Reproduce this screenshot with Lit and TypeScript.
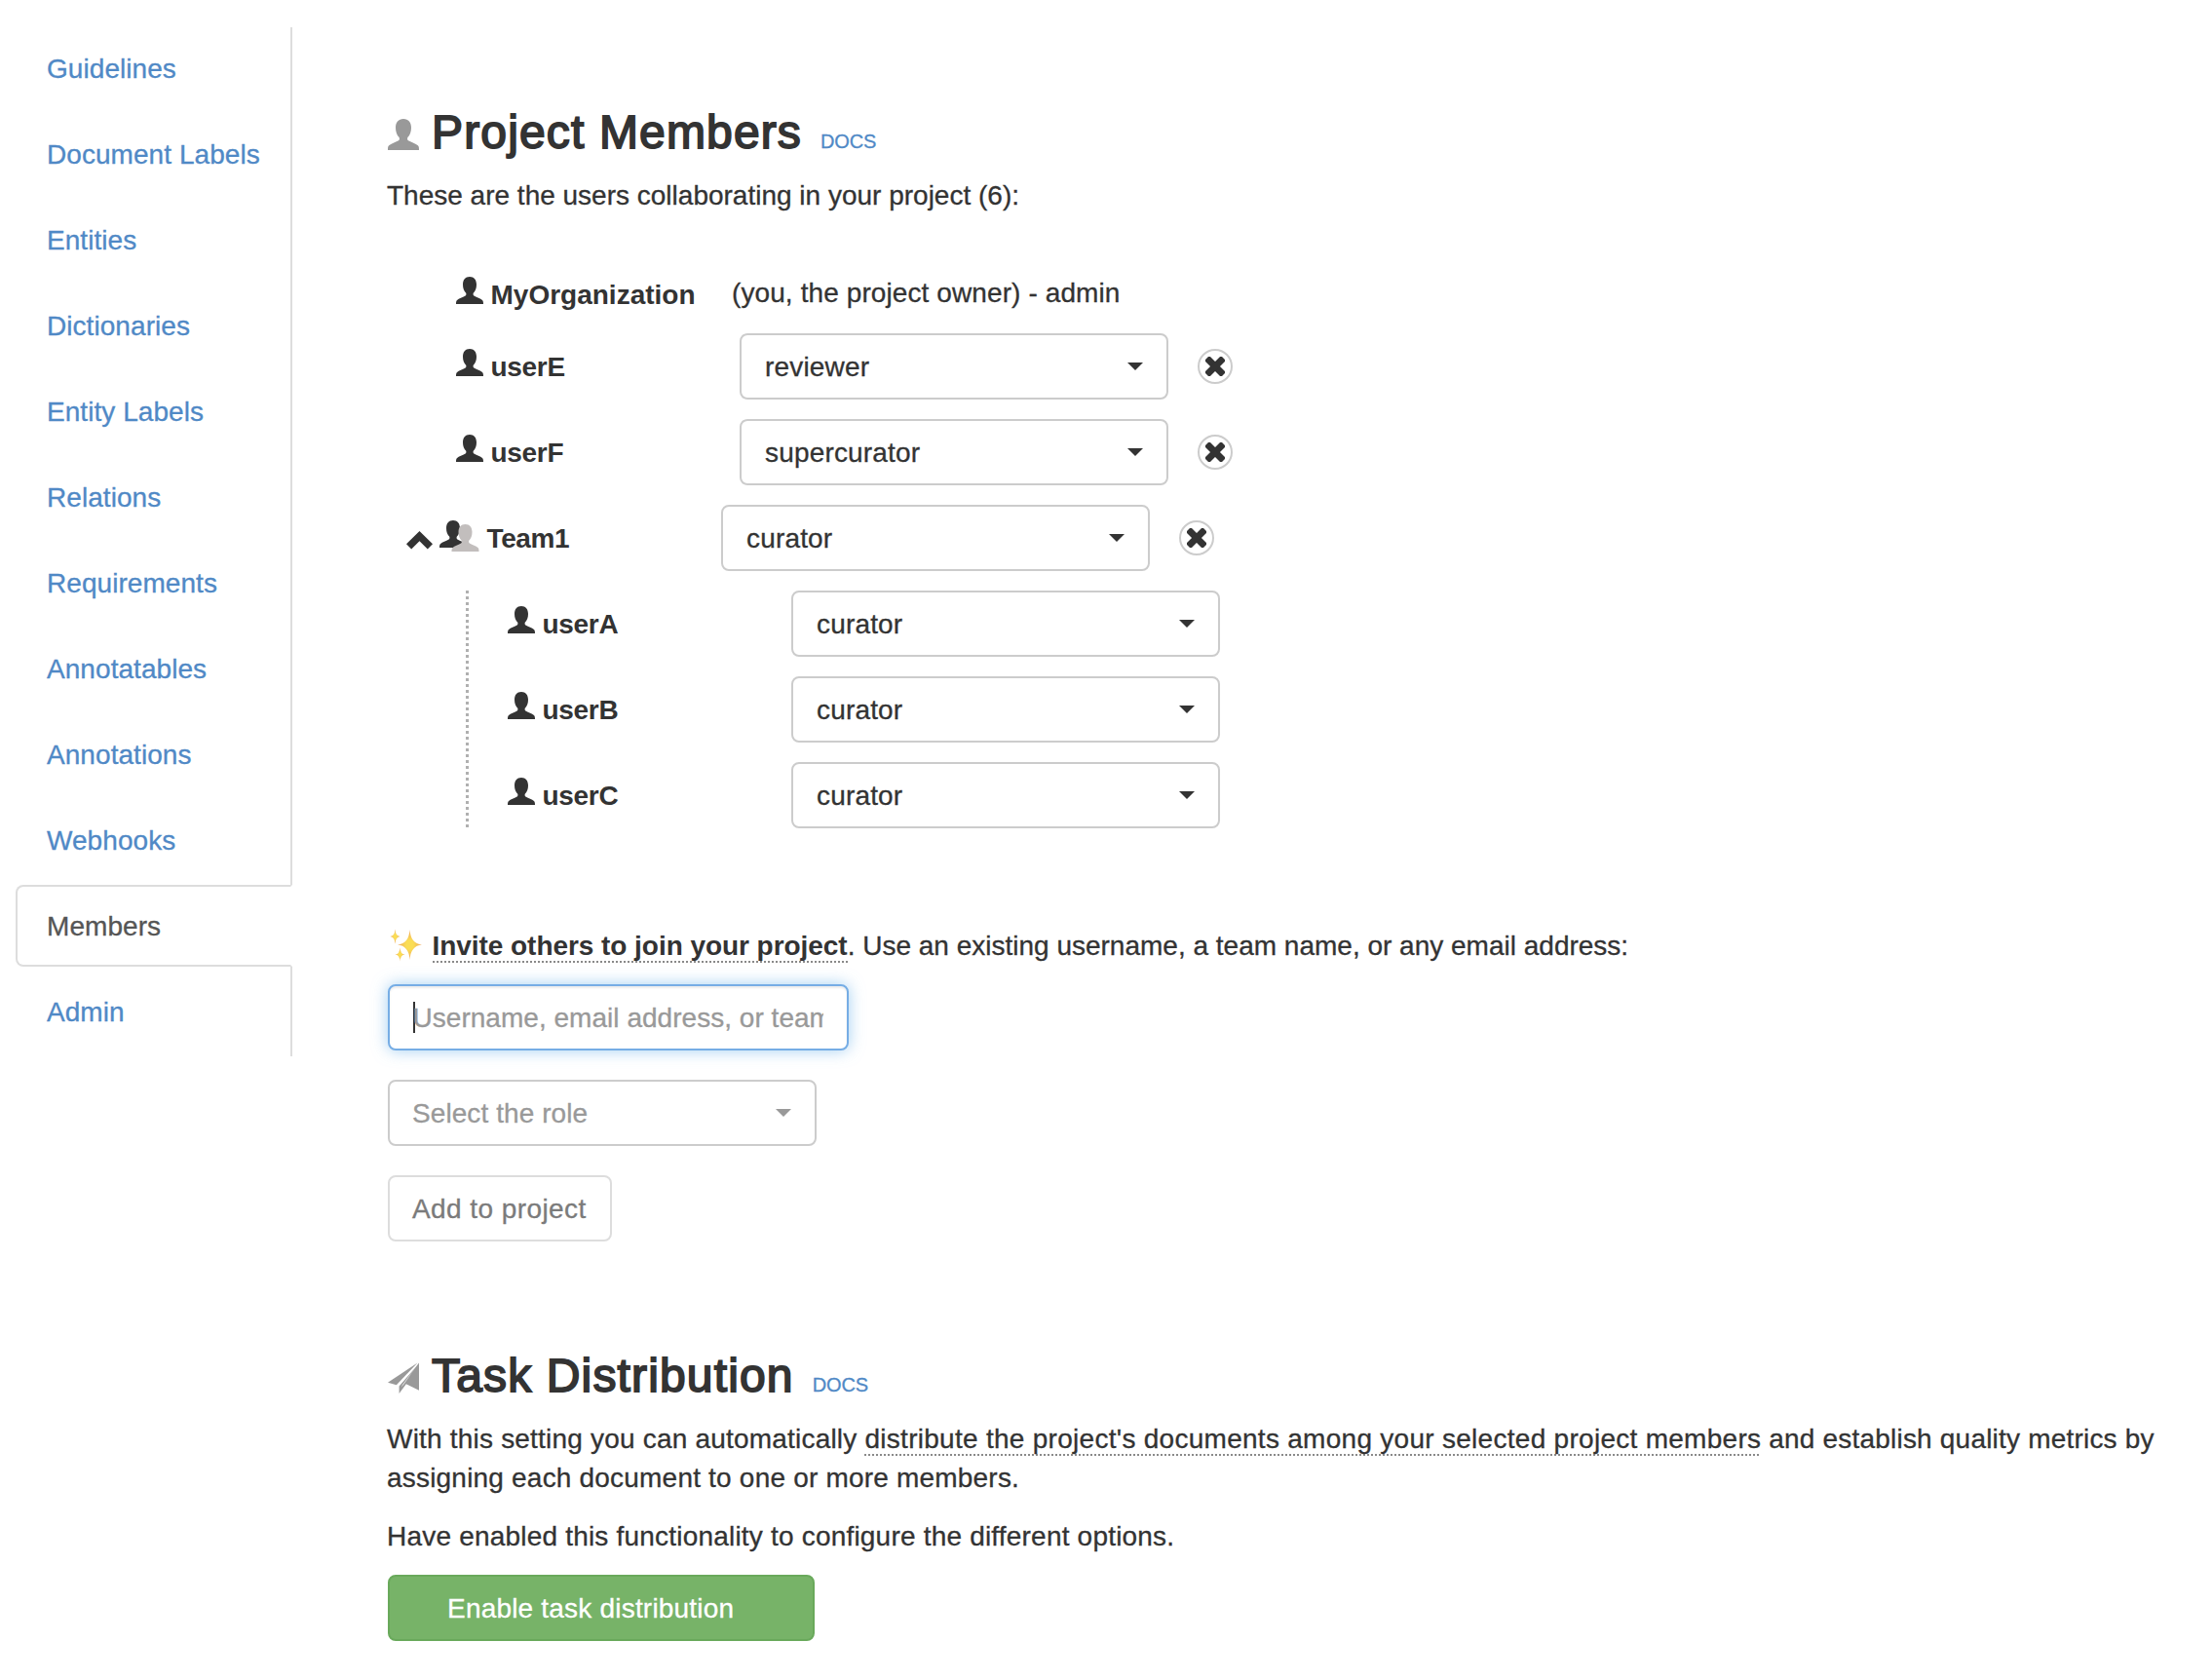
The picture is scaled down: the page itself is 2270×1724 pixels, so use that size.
import { LitElement, html, svg, css, nothing } from "lit";
import { customElement, property } from "lit/decorators.js";
import { classMap } from "lit/directives/class-map.js";

const NAV = [
  "Guidelines", "Document Labels", "Entities", "Dictionaries", "Entity Labels", "Relations",
  "Requirements", "Annotatables", "Annotations", "Webhooks", "Members", "Admin",
];

const MEMBERS = [
  { name: "userE", role: "reviewer" },
  { name: "userF", role: "supercurator" },
];

const TEAM = {
  name: "Team1",
  role: "curator",
  members: [
    { name: "userA", role: "curator" },
    { name: "userB", role: "curator" },
    { name: "userC", role: "curator" },
  ],
};

const USER_PATH =
  "M16 0C10.8 0 8 3.6 8 9c0 4.400 1.300 7.800 3.700 10 .5 1.700 .2 2.800-1.200 3.600-2.500 1.500-7.300 2.800-9.300 4.700C.1 28.400 0 29.600 0 32h32c0-2.400-.1-3.600-1.200-4.700-2-1.900-6.800-3.200-9.300-4.700-1.400-.8-1.700-1.900-1.200-3.600C22.700 16.800 24 13.400 24 9c0-5.400-2.800-9-8-9z";

const userIcon = html`<svg class="user" viewBox="0 0 32 32"><path d=${USER_PATH} fill="currentColor" /></svg>`;

const star = (x: number, y: number, rx: number, ry: number) => {
  const k = 0.07;
  return svg`<path fill="url(#gold)" d="M${x} ${y - ry}Q${x + rx * k} ${y - ry * k} ${x + rx} ${y}Q${x + rx * k} ${y + ry * k} ${x} ${y + ry}Q${x - rx * k} ${y + ry * k} ${x - rx} ${y}Q${x - rx * k} ${y - ry * k} ${x} ${y - ry}z" />`;
};

/** Bordered dropdown showing the current role and a caret. */
@customElement("role-select")
class RoleSelect extends LitElement {
  @property() value = "";
  @property({ type: Boolean, reflect: true }) placeholder = false;

  static styles = css`
    :host {
      display: flex;
      flex: none;
      align-items: center;
      justify-content: space-between;
      box-sizing: border-box;
      width: 440px;
      height: 68px;
      padding: 0 24px;
      border: 2px solid #ccc;
      border-radius: 8px;
      background: #fff;
      color: #333;
      letter-spacing: 0.17px;
    }
    :host([placeholder]) {
      padding-left: 23px;
      color: #999;
      letter-spacing: 0.08px;
    }
    .value {
      padding-top: 2px;
    }
    .caret {
      border-top: 8px solid currentColor;
      border-left: 8px solid transparent;
      border-right: 8px solid transparent;
    }
  `;

  render() {
    return html`<span class="value">${this.value}</span><span class="caret"></span>`;
  }
}

/** Round button that removes a member from the project. */
@customElement("remove-button")
class RemoveButton extends LitElement {
  static styles = css`
    :host {
      display: flex;
      flex: none;
      align-items: center;
      justify-content: center;
      box-sizing: border-box;
      width: 36px;
      height: 36px;
      border: 2px solid #ccc;
      border-radius: 50%;
      color: #333;
    }
    svg {
      display: block;
      width: 20px;
      height: 20px;
    }
  `;

  render() {
    return html`<svg viewBox="-10 -10 20 20" fill="currentColor">
      <rect x="-12" y="-3.500" width="24" height="7" rx="1.400" transform="rotate(45)" />
      <rect x="-12" y="-3.500" width="24" height="7" rx="1.400" transform="rotate(-45)" />
    </svg>`;
  }
}

@customElement("app-root")
class AppRoot extends LitElement {
  static styles = css`
    :host {
      display: flex;
      align-items: flex-start;
      box-sizing: border-box;
      width: 2270px;
      height: 1724px;
      overflow: hidden;
      background: #fff;
      color: #333;
      font: 28px/40px "Liberation Sans", Arial, sans-serif;
      -webkit-text-stroke-width: 0.3px;
    }
    svg {
      display: block;
      flex: none;
    }
    nav {
      display: flex;
      flex: none;
      flex-direction: column;
      gap: 4px;
      box-sizing: border-box;
      width: 284px;
      margin: 28px 0 0 16px;
      padding-bottom: 4px;
      border-right: 2px solid #ddd;
    }
    .tab {
      box-sizing: border-box;
      height: 84px;
      margin-right: -2px;
      padding: 21px 30px 19px;
      border: 2px solid transparent;
      border-radius: 8px 0 0 8px;
      color: #5089c6;
      letter-spacing: 0.06px;
      white-space: nowrap;
    }
    .tab.active {
      border-color: #ddd transparent #ddd #ddd;
      background: #fff;
      color: #555;
    }
    main {
      width: 1840px;
      margin-left: 98px;
      padding-top: 109px;
    }
    h1 {
      display: flex;
      align-items: baseline;
      height: 53px;
      margin: 0 0 19px;
      font-size: 48px;
      line-height: 53px;
      font-weight: 400;
    }
    .title {
      margin-left: 13px;
      letter-spacing: 1.15px;
      -webkit-text-stroke-width: 1.8px;
    }
    .icon {
      align-self: flex-start;
      width: 32px;
      height: 32px;
      margin-top: 13px;
      color: #999;
    }
    .icon svg {
      width: 32px;
      height: 32px;
    }
    .docs {
      margin-left: 19px;
      color: #5089c6;
      font-size: 20px;
      letter-spacing: -0.15px;
    }
    p {
      margin: 0 0 0 -1px;
    }
    .members {
      display: flex;
      flex-direction: column;
      gap: 20px;
      margin-top: 59px;
    }
    .row {
      display: flex;
      align-items: center;
      height: 68px;
      padding-left: 69px;
    }
    .row.owner {
      align-items: flex-start;
      height: 41px;
      padding-top: 1px;
      letter-spacing: 0.1px;
    }
    .label {
      display: flex;
      flex: none;
      align-items: flex-start;
      width: 292px;
      height: 40px;
      margin-top: 2px;
      font-weight: 700;
      letter-spacing: -0.3px;
      -webkit-text-stroke-width: 0;
    }
    .owner .label {
      width: 284px;
      letter-spacing: 0;
    }
    .label .user {
      width: 28px;
      height: 28px;
      margin: 1px 8px 0 0.5px;
    }
    .row.team {
      padding-left: 19px;
    }
    .team .label {
      width: 323px;
      letter-spacing: -0.4px;
    }
    .chevron {
      width: 27px;
      height: 19px;
      margin: 12px 7px 0 0;
    }
    .group {
      width: 41px;
      height: 32px;
      margin: 1px 7.5px 0 0;
    }
    remove-button {
      margin-left: 30px;
    }
    .nested {
      display: flex;
      flex-direction: column;
      gap: 20px;
      margin-left: 80px;
      padding-left: 42px;
      background: repeating-linear-gradient(#b0b0b0 0 3px, transparent 3px 6px) left / 3px 100% no-repeat;
    }
    .nested .row {
      padding-left: 0;
    }
    .invite {
      display: flex;
      margin-top: 101px;
      white-space: pre;
    }
    .sparkles {
      width: 34px;
      height: 34px;
      margin: 2px 10.5px 0 2px;
    }
    .term {
      padding-bottom: 2px;
      background: repeating-linear-gradient(90deg, #8a8a8a 0 2px, transparent 2px 4px) bottom / 100% 2px no-repeat;
    }
    .invite .term {
      font-weight: 700;
      letter-spacing: -0.05px;
      -webkit-text-stroke-width: 0;
    }
    .form {
      display: flex;
      flex-direction: column;
      align-items: flex-start;
      gap: 30px;
      margin: 19px 0 111px;
    }
    .input {
      display: flex;
      align-items: center;
      box-sizing: border-box;
      width: 473px;
      height: 68px;
      padding: 0 24px;
      border: 2px solid #76ade5;
      border-radius: 8px;
      background: #fff;
      box-shadow: inset 0 2px 2px rgba(0, 0, 0, 0.075), 0 0 16px rgba(102, 175, 233, 0.6);
    }
    .cursor {
      flex: none;
      width: 2px;
      height: 32px;
      margin-right: -2.5px;
      background: #333;
    }
    .hint {
      flex: 1;
      padding-top: 2px;
      overflow: hidden;
      color: #999;
      letter-spacing: 0.03px;
      white-space: nowrap;
    }
    .btn {
      box-sizing: border-box;
      height: 68px;
      border: 2px solid #ddd;
      border-radius: 8px;
      padding: 13px 23px 11px;
      white-space: nowrap;
    }
    .add {
      width: 230px;
      color: #7b7b7b;
      letter-spacing: 0.42px;
    }
    .enable {
      width: 438px;
      padding-left: 59px;
      border-color: #69a95b;
      background: #77b368;
      color: #fff;
      letter-spacing: 0.2px;
    }
    .copy {
      margin-bottom: 20px;
      letter-spacing: 0.2px;
    }
    .copy.last {
      margin-bottom: 19px;
    }
    .copy .term {
      letter-spacing: 0.28px;
    }
  `;

  private heading(icon: unknown, title: string) {
    return html`<h1>
      <span class="icon">${icon}</span><span class="title">${title}</span><a class="docs">DOCS</a>
    </h1>`;
  }

  private member(m: { name: string; role: string }, removable: boolean) {
    return html`<div class="row">
      <div class="label">${userIcon}<span>${m.name}</span></div>
      <role-select .value=${m.role}></role-select>
      ${removable ? html`<remove-button></remove-button>` : nothing}
    </div>`;
  }

  render() {
    const plane = html`<svg viewBox="0 0 32 32" fill="currentColor">
      <path d="M30.500 0.500L0 20.700l8.800 2.600z" />
      <path d="M32 0.500V28.800L18.800 22.200 11.600 32V24.600L29 4.500z" />
      <path d="M13.300 25.600L28.500 5 16 23z" fill="#fff" />
    </svg>`;

    return html`
      <nav>${NAV.map((n) => html`<a class=${classMap({ tab: true, active: n === "Members" })}>${n}</a>`)}</nav>
      <main>
        ${this.heading(userIcon, "Project Members")}
        <p>These are the users collaborating in your project (6):</p>

        <div class="members">
          <div class="row owner">
            <div class="label">${userIcon}<span>MyOrganization</span></div>
            <span>(you, the project owner) - admin</span>
          </div>
          ${MEMBERS.map((m) => this.member(m, true))}
          <div class="row team">
            <div class="label">
              <svg class="chevron" viewBox="0 0 27 19" fill="currentColor">
                <path d="M13.500 0L27 13.300 21.800 18.500 13.500 10.300 5.200 18.500 0 13.300z" />
              </svg>
              <svg class="group" viewBox="0 0 41 32">
                <path d=${USER_PATH} transform="scale(.875)" fill="#333" />
                <path d=${USER_PATH} transform="translate(12.500 4) scale(.875)" fill="#c2bebd" />
              </svg>
              <span>${TEAM.name}</span>
            </div>
            <role-select .value=${TEAM.role}></role-select>
            <remove-button></remove-button>
          </div>
          <div class="nested">${TEAM.members.map((m) => this.member(m, false))}</div>
        </div>

        <div class="invite">
          <svg class="sparkles" viewBox="0 0 34 34">
            <defs>
              <radialGradient id="gold">
                <stop offset="0.3" stop-color="#fadd55" />
                <stop offset="1" stop-color="#eea45c" />
              </radialGradient>
            </defs>
            ${star(20.5, 16.5, 12.5, 15.5)}${star(5.500, 8, 5, 7.500)}${star(10.500, 26.500, 5, 7)}
          </svg><p><span class="term">Invite others to join your project</span><span>. Use an existing username, a team name, or any email address:</span></p>
        </div>
        <div class="form">
          <div class="input">
            <span class="cursor"></span><span class="hint">Username, email address, or team name</span>
          </div>
          <role-select placeholder .value=${"Select the role"}></role-select>
          <div class="btn add">Add to project</div>
        </div>

        ${this.heading(plane, "Task Distribution")}
        <p class="copy">
          With this setting you can automatically
          <span class="term">distribute the project's documents among your selected project members</span>
          and establish quality metrics by assigning each document to one or more members.
        </p>
        <p class="copy last">Have enabled this functionality to configure the different options.</p>
        <div class="btn enable">Enable task distribution</div>
      </main>
    `;
  }
}
